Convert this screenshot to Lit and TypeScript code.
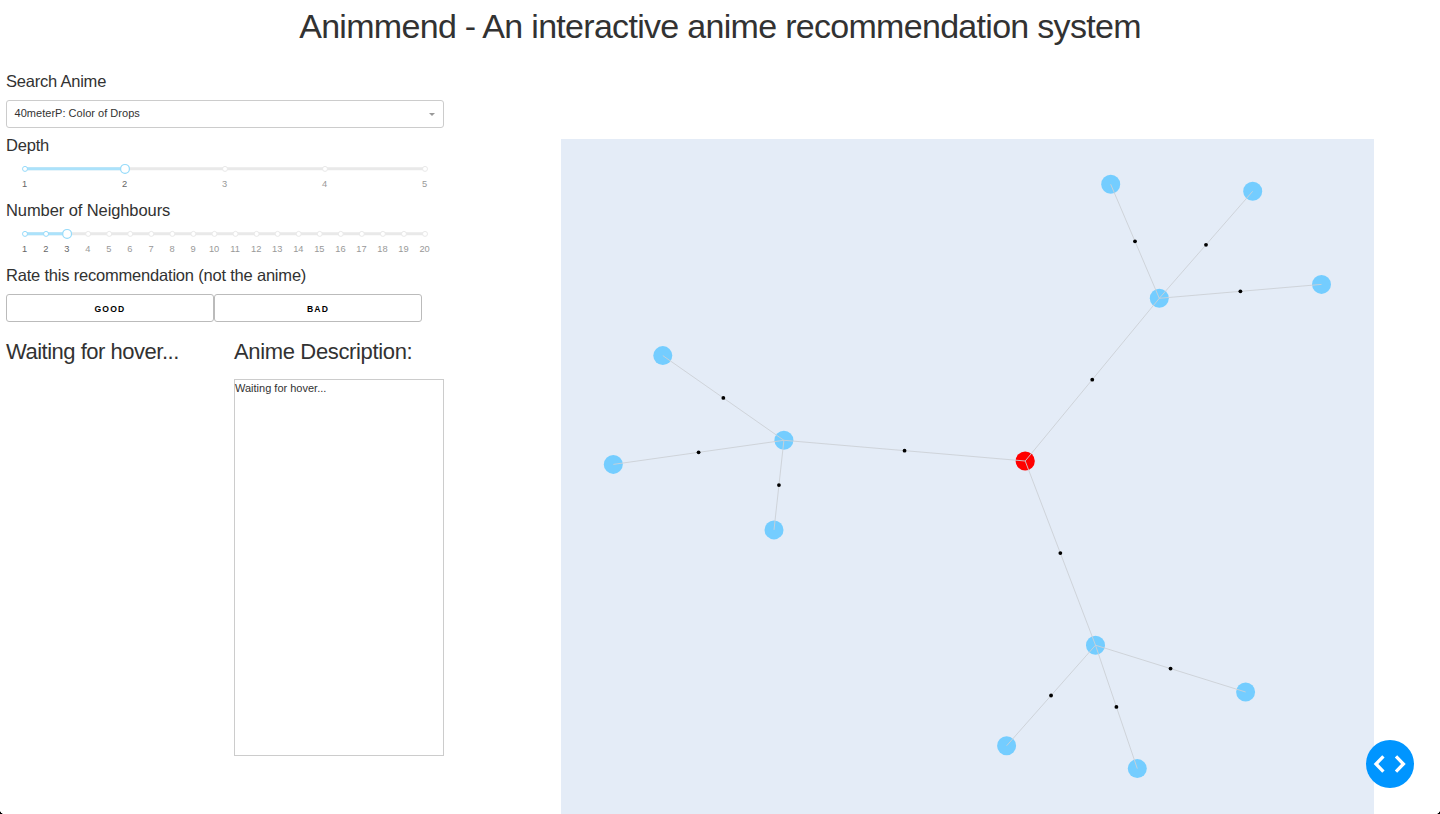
import { LitElement, html, css, svg } from "lit";
import { customElement, property } from "lit/decorators.js";

@customElement("step-slider")
class StepSlider extends LitElement {
  @property({ type: Number }) max = 5;
  @property({ type: Number }) value = 1;

  static styles = css`
    :host { display: block; }
    .slider { display: grid; grid-template-rows: 14px 16px; width: 400px; margin-left: 18.7px; }
    .track { display: block; width: 400px; height: 14px; overflow: visible; }
    .marks { display: flex; justify-content: space-between; }
    .mark { width: 0; display: flex; justify-content: center; font-size: 9.3px; line-height: 16px; color: #999; }
    .on { color: #666; }
  `;

  render() {
    const steps = Array.from({ length: this.max }, (_, i) => i + 1);
    const at = (n: number) => ((n - 1) / (this.max - 1)) * 400;
    return html`<div class="slider">
      <svg class="track" viewBox="0 0 400 14">
        <rect x="0" y="5.3" width="400" height="3" rx="1.5" fill="#e9e9e9" />
        <rect x="0" y="5.3" width=${at(this.value)} height="3" rx="1.5" fill="#abe2fb" />
        ${steps.map((n) => svg`<circle cx=${at(n)} cy="6.9" r="2.5" fill="#fff"
          stroke=${n <= this.value ? "#96dbfa" : "#e9e9e9"} stroke-width="1" />`)}
        <circle cx=${at(this.value)} cy="6.9" r="4.4" fill="#fff" stroke="#96dbfa" stroke-width="1.2" />
      </svg>
      <div class="marks">
        ${steps.map((n) => html`<span class="mark ${n <= this.value ? "on" : ""}">${n}</span>`)}
      </div>
    </div>`;
  }
}

type Point = [number, number];
const ROOT: Point = [464.2, 322];
const CLUSTERS: { hub: Point; leaves: Point[] }[] = [
  { hub: [598.3, 159.3], leaves: [[549.7, 45.3], [691.7, 52.3], [760.5, 145.4]] },
  { hub: [222.9, 301.3], leaves: [[101.8, 216.6], [52.3, 325.4], [213, 390.9]] },
  { hub: [534.5, 506.2], leaves: [[445.6, 606.8], [576.3, 629.6], [684.6, 553]] },
];

@customElement("anime-graph")
class AnimeGraph extends LitElement {
  static styles = css`
    :host { display: block; width: 813px; height: 675px; background: #e4ecf7; }
    .canvas { display: block; }
  `;

  render() {
    const edges = CLUSTERS.flatMap(({ hub, leaves }) => [
      [ROOT, hub],
      ...leaves.map((leaf) => [hub, leaf]),
    ]);
    const nodes = CLUSTERS.flatMap(({ hub, leaves }) => [hub, ...leaves]);
    return html`<svg class="canvas" width="813" height="675" viewBox="0 0 813 675">
      ${nodes.map(([x, y]) => svg`<circle cx=${x} cy=${y} r="9.5" fill="#74cdff" />`)}
      <circle cx=${ROOT[0]} cy=${ROOT[1]} r="9.6" fill="#f00" />
      ${edges.map(([a, b]) => svg`<line x1=${a[0]} y1=${a[1]} x2=${b[0]} y2=${b[1]}
        stroke="#ccd0d6" stroke-width="0.9" />`)}
      ${edges.map(([a, b]) => svg`<circle cx=${(a[0] + b[0]) / 2} cy=${(a[1] + b[1]) / 2} r="1.9" fill="#000" />`)}
    </svg>`;
  }
}

@customElement("app-root")
class AppRoot extends LitElement {
  static styles = css`
    :host {
      display: block; position: relative; width: 1440px; height: 814px; overflow: hidden;
      box-sizing: border-box; background: #fff; color: #323232;
      font-family: "Liberation Sans", Arial, sans-serif; font-size: 11px;
    }
    .title { margin: 0; height: 71px; padding-top: 6px; box-sizing: border-box; text-align: center;
      font-size: 34px; line-height: 40px; font-weight: 400; letter-spacing: -0.7px; }
    .body { display: flex; justify-content: space-between; padding: 0 66px 0 6px; }
    .panel { width: 438px; }
    .label { margin: 0; font-size: 16.5px; line-height: 20px; font-weight: 400; letter-spacing: -0.2px; white-space: nowrap; }
    .search { letter-spacing: -0.22px; }
    .neighbours { letter-spacing: -0.09px; }
    .dropdown { margin: 9px 0 7px; height: 28px; box-sizing: border-box; border: 1px solid #ccc;
      border-radius: 3px; padding: 0 8px 0 7.6px; display: flex; align-items: center; justify-content: space-between; }
    .choice { line-height: 24px; padding-bottom: 2px; letter-spacing: 0.02px; }
    .caret { width: 6px; height: 3px; margin-top: 1px; }
    .slider { margin: 7px 0 8px; height: 30px; }
    .buttons { display: flex; margin-top: 9px; }
    .rate { width: 208px; height: 28px; padding: 2px 0 0; border: 1px solid #bbb; border-radius: 3px; background: #fff;
      color: #000; font: 700 8.6px/24px "Liberation Sans", Arial, sans-serif; letter-spacing: 1.2px; text-align: center; }
    .details { display: grid; grid-template-columns: 228px 210px; margin-top: 17px; }
    .heading { margin: 0 0 14px; font-size: 22px; line-height: 26px; font-weight: 400; white-space: nowrap; letter-spacing: -0.49px; }
    .wide { letter-spacing: -0.35px; }
    .description { height: 377px; box-sizing: border-box; border: 1px solid #ccc; line-height: 17px; }
    .graph { margin-top: 68px; }
    .devtools { position: absolute; left: 1366px; top: 740px; width: 48px; height: 48px; }
    .corner { position: absolute; bottom: 0; width: 5px; height: 5px; }
    .left { left: 0; background: radial-gradient(circle at 100% 0, transparent 5px, #000 5.6px); }
    .right { right: 0; background: radial-gradient(circle at 0 0, transparent 5px, #000 5.6px); }
  `;

  render() {
    return html`
      <h1 class="title">Animmend - An interactive anime recommendation system</h1>
      <main class="body">
        <section class="panel">
          <h6 class="label search">Search Anime</h6>
          <div class="dropdown">
            <span class="choice">40meterP: Color of Drops</span>
            <svg class="caret" viewBox="0 0 6 3"><path d="M0 0h6L3 3z" fill="#999" /></svg>
          </div>
          <h6 class="label">Depth</h6>
          <step-slider class="slider" .max=${5} .value=${2}></step-slider>
          <h6 class="label neighbours">Number of Neighbours</h6>
          <step-slider class="slider" .max=${20} .value=${3}></step-slider>
          <h6 class="label">Rate this recommendation (not the anime)</h6>
          <div class="buttons">
            <button class="rate">GOOD</button>
            <button class="rate">BAD</button>
          </div>
          <div class="details">
            <h4 class="heading">Waiting for hover...</h4>
            <div>
              <h4 class="heading wide">Anime Description:</h4>
              <div class="description">Waiting for hover...</div>
            </div>
          </div>
        </section>
        <anime-graph class="graph"></anime-graph>
      </main>
      <svg class="devtools" viewBox="0 0 48 48">
        <circle cx="24" cy="24" r="24" fill="#0095ff" />
        <path d="M17.4 16.4L10 24L17.4 31.6M30 16.4L37.4 24L30 31.6" fill="none" stroke="#fff" stroke-width="3.3" />
      </svg>
      <span class="corner left"></span>
      <span class="corner right"></span>
    `;
  }
}
